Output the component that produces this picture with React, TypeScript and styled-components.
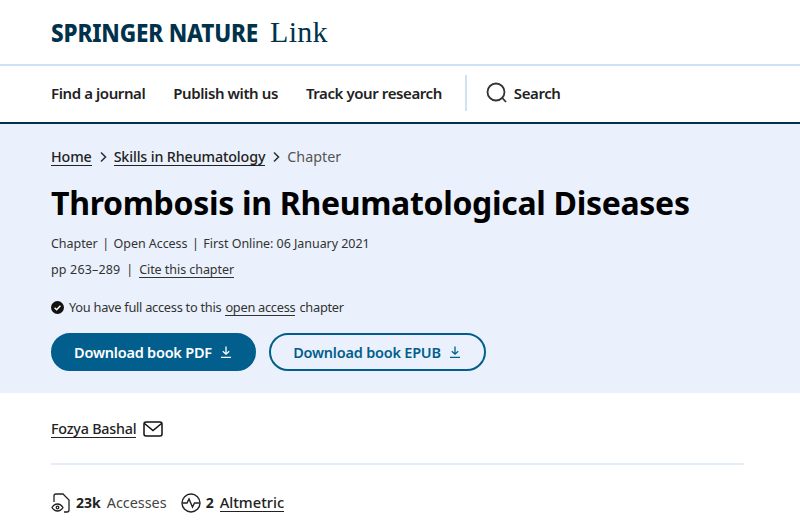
import React from 'react';
import styled, { createGlobalStyle } from 'styled-components';

const Global = createGlobalStyle`
  html, body { margin: 0; padding: 0; background: #fff; overflow: hidden; }
  body { font-family: "Noto Sans", "Open Sans", sans-serif; color: #222; }
  * { box-sizing: border-box; }
`;

const Page = styled.div`
  width: 800px;
  height: 521px;
  overflow: hidden;
`;

const LogoBar = styled.header`
  height: 66px;
  padding: 15px 51px 0;
  border-bottom: 2px solid #cfe2f5;
  display: flex;
  align-items: flex-start;
  gap: 11px;
`;

const LogoMark = styled.span`
  display: block;
  width: 208px;
  white-space: nowrap;
  font-weight: 800;
  font-size: 25px;
  line-height: 34px;
  letter-spacing: -0.2px;
  color: #01324b;
  transform: scaleX(0.9);
  transform-origin: left center;
`;

const LogoLink = styled.span`
  font-family: "Liberation Serif", serif;
  font-size: 30px;
  line-height: 34px;
  letter-spacing: 0.3px;
  color: #01324b;
`;

const NavBar = styled.nav`
  height: 56px;
  padding: 9px 51px 0;
  display: flex;
  align-items: flex-start;
`;

const NavItem = styled.a`
  font-weight: 600;
  font-size: 15px;
  line-height: 36px;
  letter-spacing: -0.41px;
  color: #222;
  margin-right: 28px;
  white-space: nowrap;
`;

const NavDivider = styled.div`
  width: 2px;
  height: 36px;
  background: #cfe2f5;
  margin-left: -5px;
  margin-right: 19px;
`;

const SearchIcon = styled.svg`
  width: 22px;
  height: 22px;
  margin: 7px 6px 0 0;
  flex: none;
`;

const Hero = styled.section`
  height: 271px;
  background: #eaf1fc;
  border-top: 2px solid #01324b;
  padding: 21px 51px 0;
`;

const Crumbs = styled.div`
  display: flex;
  align-items: center;
  gap: 7px;
  font-size: 14.3px;
  line-height: 24px;
  color: #222;
`;

const CrumbLink = styled.a`
  font-weight: 500;
  color: #222;
  border-bottom: 1px solid #222;
  line-height: 17px;
  letter-spacing: -0.14px;
`;

const CrumbCurrent = styled.span`
  color: #555;
`;

const Title = styled.h1`
  margin: 12px 0 0;
  font-size: 32px;
  font-weight: 700;
  line-height: 44px;
  letter-spacing: -0.31px;
  color: #000;
  white-space: nowrap;
`;

const MetaRow = styled.div<{ $second?: boolean }>`
  margin-top: ${p => (p.$second ? '0' : '6px')};
  display: flex;
  align-items: center;
  font-size: 12.5px;
  line-height: 26px;
  letter-spacing: -0.05px;
  color: #333;
`;

const Sep = styled.span`
  margin: 0 4.5px;
`;

const PagesSep = styled(Sep)`
  margin: 0 6px;
`;

const PageRange = styled.span`
  letter-spacing: 0.15px;
`;

const MetaLink = styled.a`
  border-bottom: 1px solid #333;
  line-height: 15px;
  color: #333;
`;

const AccessRow = styled.div`
  margin-top: 11px;
  display: flex;
  align-items: center;
  gap: 5px;
  font-size: 12.8px;
  line-height: 26px;
  letter-spacing: -0.27px;
  color: #333;
`;

const AccessLink = styled(MetaLink)`
  display: inline-block;
  margin: 0 1px;
`;

const Buttons = styled.div`
  margin-top: 13px;
  display: flex;
  gap: 13px;
`;

const Button = styled.a<{ $primary?: boolean }>`
  height: 38px;
  border-radius: 19px;
  display: flex;
  align-items: center;
  justify-content: center;
  gap: 7px;
  font-size: 14.5px;
  font-weight: 600;
  letter-spacing: -0.22px;
  white-space: nowrap;
  width: ${p => (p.$primary ? '205px' : '217px')};
  color: ${p => (p.$primary ? '#fff' : '#025e8d')};
  background: ${p => (p.$primary ? '#025e8d' : 'transparent')};
  border: 2px solid #025e8d;
`;

const DownloadSvg = styled.svg`
  width: 14px;
  height: 14px;
  flex: none;
`;

const Body = styled.main`
  padding: 23px 56px 0 51px;
`;

const AuthorRow = styled.div`
  display: flex;
  align-items: center;
  gap: 7px;
  height: 26px;
  font-size: 14.3px;
  font-weight: 500;
  letter-spacing: -0.2px;
  color: #222;
`;

const AuthorLink = styled.a`
  border-bottom: 1px solid #222;
  line-height: 17px;
`;

const Rule = styled.hr`
  margin: 21px 0 0;
  border: 0;
  height: 2px;
  background: #e3eefa;
`;

const Metrics = styled.div`
  margin-top: 25px;
  display: flex;
  align-items: center;
  font-size: 14px;
  line-height: 26px;
  color: #333;
`;

const MetricIcon = styled.svg`
  width: 20px;
  height: 20px;
  flex: none;
  margin-right: 5px;
`;

const MetricValue = styled.strong`
  font-weight: 700;
  color: #222;
  margin-right: 6px;
`;

const MetricLabel = styled.span`
  font-size: 14.4px;
  color: #444;
  margin-right: 14px;
`;

const MetricLink = styled.a`
  border-bottom: 1px solid #222;
  line-height: 17px;
  font-size: 14.7px;
  color: #222;
  font-weight: 500;
`;

const Chevron = () => (
  <svg width="8" height="12" viewBox="0 0 8 12" fill="none" stroke="#333" strokeWidth="1.6">
    <path d="m2 1.5 4.5 4.5L2 10.5" />
  </svg>
);

const Download = ({ color }: { color: string }) => (
  <DownloadSvg viewBox="0 0 14 14" fill="none" stroke={color} strokeWidth="1.3">
    <path d="M7 1.5v7.500M3.800 6.200 7 9.200l3.200-3M2 12.400h10" />
  </DownloadSvg>
);

export default function App() {
  return (
    <Page>
      <Global />
      <LogoBar>
        <LogoMark>SPRINGER NATURE</LogoMark>
        <LogoLink>Link</LogoLink>
      </LogoBar>
      <NavBar>
        <NavItem>Find a journal</NavItem>
        <NavItem>Publish with us</NavItem>
        <NavItem>Track your research</NavItem>
        <NavDivider />
        <SearchIcon viewBox="0 0 22 22" fill="none" stroke="#333" strokeWidth="1.8">
          <circle cx="10" cy="10" r="8.500" />
          <path d="m16.300 16 3.700 4" />
        </SearchIcon>
        <NavItem>Search</NavItem>
      </NavBar>
      <Hero>
        <Crumbs>
          <CrumbLink>Home</CrumbLink>
          <Chevron />
          <CrumbLink>Skills in Rheumatology</CrumbLink>
          <Chevron />
          <CrumbCurrent>Chapter</CrumbCurrent>
        </Crumbs>
        <Title>Thrombosis in Rheumatological Diseases</Title>
        <MetaRow>
          Chapter<Sep>|</Sep>Open Access<Sep>|</Sep>First Online: 06 January 2021
        </MetaRow>
        <MetaRow $second>
          <PageRange>pp 263–289</PageRange><PagesSep>|</PagesSep><MetaLink>Cite this chapter</MetaLink>
        </MetaRow>
        <AccessRow>
          <svg width="13" height="13" viewBox="0 0 13 13">
            <circle cx="6.500" cy="6.500" r="6.500" fill="#111" />
            <path d="m3.600 6.800 2 1.900 3.800-3.900" fill="none" stroke="#fff" strokeWidth="1.500" />
          </svg>
          <span>
            You have full access to this <AccessLink>open access</AccessLink> chapter
          </span>
        </AccessRow>
        <Buttons>
          <Button $primary>Download book PDF <Download color="#fff" /></Button>
          <Button>Download book EPUB <Download color="#025e8d" /></Button>
        </Buttons>
      </Hero>
      <Body>
        <AuthorRow>
          <AuthorLink>Fozya Bashal</AuthorLink>
          <svg width="20" height="16" viewBox="0 0 20 16" fill="none" stroke="#111" strokeWidth="1.500">
            <rect x="1" y="1" width="18" height="14" rx="2" />
            <path d="m1.500 2.500 8.500 7 8.500-7" />
          </svg>
        </AuthorRow>
        <Rule />
        <Metrics>
          <MetricIcon viewBox="0 0 20 20" fill="none" stroke="#222" strokeWidth="1.300">
            <path d="M3 9V3a2 2 0 0 1 2-2h7l6 6v10a2 2 0 0 1-2 2h-3" />
            <path d="M1 14.500c1.500-2.500 3.500-3.500 5.500-3.500s4 1 5.500 3.500C10.500 17 8.500 18 6.500 18S2.500 17 1 14.500Z" />
            <circle cx="6.500" cy="14.500" r="1.300" />
          </MetricIcon>
          <MetricValue>23k</MetricValue>
          <MetricLabel>Accesses</MetricLabel>
          <MetricIcon viewBox="0 0 20 20" fill="none" stroke="#222" strokeWidth="1.400">
            <circle cx="10" cy="10" r="9" />
            <path d="M1.500 10H6l2-4 3.500 8 2-4h5" />
          </MetricIcon>
          <MetricValue>2</MetricValue>
          <MetricLink>Altmetric</MetricLink>
        </Metrics>
      </Body>
    </Page>
  );
}
